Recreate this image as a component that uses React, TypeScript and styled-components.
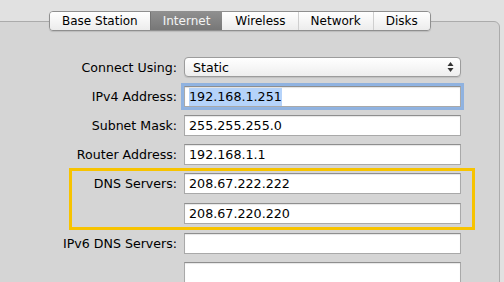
import styled, { createGlobalStyle } from "styled-components";

const GlobalStyle = createGlobalStyle`
  html, body {
    margin: 0;
    padding: 0;
    background: #e1e1e1;
    overflow: hidden;
  }
  body {
    font-family: "DejaVu Sans", "Noto Sans", sans-serif;
    color: #000;
  }
`

const Page = styled.div`
  width: 504px;
  height: 282px;
  padding-top: 10px;
  box-sizing: border-box;
  overflow: hidden;
`

// tabs
const TabBar = styled.div`
  position: relative;
  z-index: 1;
  display: inline-flex;
  margin-left: 49px;
  height: 20px;
  box-sizing: border-box;
  border: 1px solid #8f8f8f;
  border-radius: 4px;
  overflow: hidden;
  box-shadow: 0 1px 1px rgba(0, 0, 0, 0.12);
`
const Tab = styled.div<{ $active?: boolean; $sep?: boolean }>`
  position: relative;
  display: flex;
  align-items: center;
  padding: 0 12px;
  font-size: 12px;
  line-height: 18px;
  color: ${(p) => (p.$active ? "#f4f4f4" : "#000")};
  background: ${(p) =>
    p.$active
      ? "linear-gradient(#8f8f8f, #777777)"
      : "linear-gradient(#ffffff, #ececec)"};
  border-left: 1px solid ${(p) => (p.$active ? "#747474" : p.$sep ? "#cfcfcf" : "transparent")};
  &:first-child {
    border-left: none;
  }
`

// panel
const Panel = styled.div`
  margin: -10px 4px 0 -10px;
  height: 300px;
  border: 1px solid #ababab;
  border-radius: 6px;
  background: #d5d5d5;
  padding: 35px 0 0 9px;
  box-sizing: border-box;
`

const Form = styled.div`
  display: grid;
  row-gap: 8px;
  width: 504px;
`

const Row = styled.div<{ $label: number }>`
  display: grid;
  grid-template-columns: ${(p) => p.$label}px 277px;
  column-gap: 7px;
  align-items: center;
`

const Label = styled.div`
  text-align: right;
  font-size: 12.6px;
  white-space: nowrap;
  color: #000;
`

const Field = styled.div<{ $focus?: boolean }>`
  height: 21px;
  box-sizing: border-box;
  border: 1px solid #a9a9a9;
  border-top-color: #8e8e8e;
  background: #fff;
  box-shadow: ${(p) =>
    p.$focus
      ? "0 0 0 1px #8fb4e4, 0 0 0 3px rgba(120, 165, 225, 0.75), inset 0 1px 1px rgba(0,0,0,0.12)"
      : "inset 0 1px 1px rgba(0,0,0,0.1)"};
  padding-left: 4px;
  display: flex;
  align-items: center;
  font-size: 12.7px;
  color: #000;
  white-space: nowrap;
`

const Selected = styled.span`
  background: #b5d3fa;
  padding: 1px 0 2px;
`

const Popup = styled.div`
  height: 20px;
  box-sizing: border-box;
  border: 1px solid #9c9c9c;
  border-radius: 4px;
  background: linear-gradient(#ffffff, #eeeeee);
  box-shadow: 0 1px 1px rgba(0, 0, 0, 0.1);
  display: flex;
  align-items: center;
  justify-content: space-between;
  padding: 0 6px 0 8px;
  font-size: 12.6px;
  color: #000;
`

const Highlight = styled.div`
  margin: -5px 29px -5px 69px;
  border: 3px solid #f7c300;
  padding: 2px 0 3px;
  display: grid;
  row-gap: 9px;
`

const Arrows = () => (
  <svg width="7" height="12" viewBox="0 0 7 12">
    <path d="M3.5 1 L6.5 5 L0.5 5 Z" fill="#333" />
    <path d="M3.5 11 L6.5 7 L0.5 7 Z" fill="#333" />
  </svg>
)

const tabs = ["Base Station", "Internet", "Wireless", "Network", "Disks"]

export default function App() {
  return (
    <>
      <GlobalStyle />
      <Page>
        <TabBar>
          {tabs.map((t, i) => (
            <Tab key={t} $active={t === "Internet"} $sep={i > 0 && tabs[i - 1] !== "Internet"}>
              {t}
            </Tab>
          ))}
        </TabBar>
        <Panel>
          <Form>
            <Row $label={177} style={{ marginBottom: 1 }}>
              <Label>Connect Using:</Label>
              <Popup>
                <span>Static</span>
                <Arrows />
              </Popup>
            </Row>
            <Row $label={177}>
              <Label>IPv4 Address:</Label>
              <Field $focus>
                <Selected>192.168.1.251</Selected>
              </Field>
            </Row>
            <Row $label={177}>
              <Label>Subnet Mask:</Label>
              <Field>255.255.255.0</Field>
            </Row>
            <Row $label={177}>
              <Label>Router Address:</Label>
              <Field>192.168.1.1</Field>
            </Row>
            <Highlight>
              <Row $label={105}>
                <Label>DNS Servers:</Label>
                <Field>208.67.222.222</Field>
              </Row>
              <Row $label={105}>
                <Label />
                <Field>208.67.220.220</Field>
              </Row>
            </Highlight>
            <Row $label={177}>
              <Label>IPv6 DNS Servers:</Label>
              <Field />
            </Row>
            <Row $label={177}>
              <Label />
              <Field />
            </Row>
          </Form>
        </Panel>
      </Page>
    </>
  )
}
